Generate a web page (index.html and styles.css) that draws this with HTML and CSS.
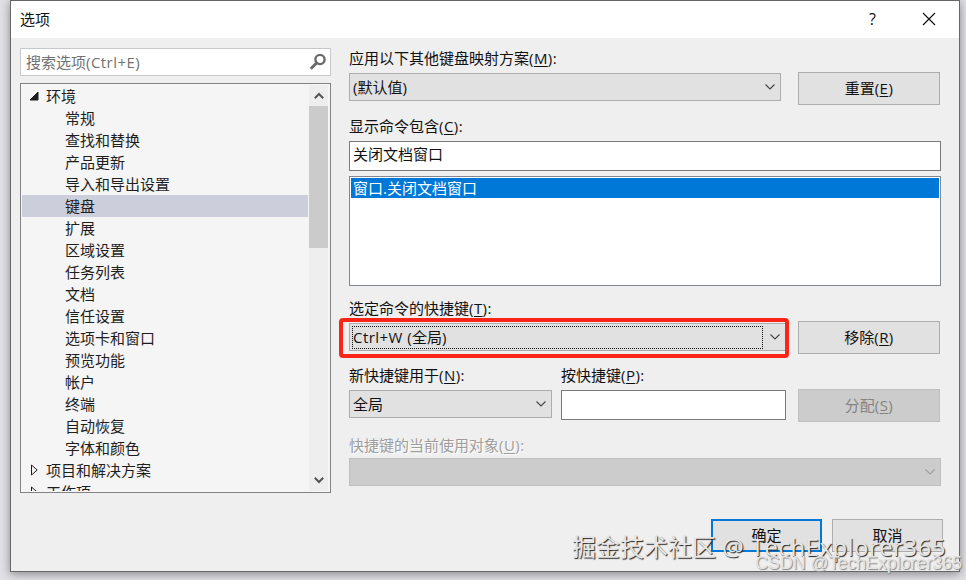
FILE: index.html
```
<!DOCTYPE html>
<html lang="zh-CN">
<head>
	<meta charset="UTF-8">
	<title>选项</title>
	<link rel="stylesheet" href="styles.css">
</head>
<body>

<div class="dialog">
	<div class="titlebar">
		<span class="title">选项</span>
		<span class="help">?</span>
		<svg class="close" width="14" height="14" viewBox="0 0 14 14"><path d="M1 1L13 13M13 1L1 13"/></svg>
	</div>

	<div class="content">
		<div class="side">
			<div class="search">
				<span>搜索选项<span class="en">(Ctrl+E)</span></span>
				<svg width="18" height="18" viewBox="0 0 18 18"><circle cx="11" cy="6.5" r="4.6"/><path d="M7.8 9.8L1.8 15.8"/></svg>
			</div>
			<div class="tree">
				<ul class="list">
					<li class="root"><svg width="10" height="10" viewBox="0 0 10 10"><path class="full" d="M9 1V9H1Z"/></svg>环境</li>
					<li>常规</li>
					<li>查找和替换</li>
					<li>产品更新</li>
					<li>导入和导出设置</li>
					<li class="on">键盘</li>
					<li>扩展</li>
					<li>区域设置</li>
					<li>任务列表</li>
					<li>文档</li>
					<li>信任设置</li>
					<li>选项卡和窗口</li>
					<li>预览功能</li>
					<li>帐户</li>
					<li>终端</li>
					<li>自动恢复</li>
					<li>字体和颜色</li>
					<li class="root"><svg width="10" height="12" viewBox="0 0 10 12"><path d="M2.5 1V11L8.2 6Z"/></svg>项目和解决方案</li>
					<li class="root"><svg width="10" height="12" viewBox="0 0 10 12"><path d="M2.5 1V11L8.2 6Z"/></svg>工作项</li>
				</ul>
				<div class="scroll">
					<svg width="10" height="8" viewBox="0 0 10 8"><path d="M.8 6.2L5 2L9.2 6.2"/></svg>
					<div class="thumb"></div>
					<svg width="10" height="8" viewBox="0 0 10 8"><path d="M.8 1.8L5 6L9.2 1.8"/></svg>
				</div>
			</div>
		</div>

		<div class="main">
			<div class="row">
				<div class="field wide">
					<label>应用以下其他键盘映射方案<span class="en">(<u>M</u>):</span></label>
					<div class="select"><span>(默认值)</span><svg class="arrow" width="12" height="8" viewBox="0 0 12 8"><path d="M1.5 1.5L6 6L10.5 1.5"/></svg></div>
				</div>
				<div class="btn">重置<span class="en">(<u>E</u>)</span></div>
			</div>

			<div class="field show">
				<label>显示命令包含<span class="en">(<u>C</u>):</span></label>
				<div class="input">关闭文档窗口</div>
				<div class="box"><div class="item">窗口.关闭文档窗口</div></div>
			</div>

			<div class="row keys">
				<div class="field wide">
					<label>选定命令的快捷键<span class="en">(<u>T</u>):</span></label>
					<div class="select focus"><span class="value"><span class="en">Ctrl+W (</span>全局)</span><svg class="arrow" width="12" height="8" viewBox="0 0 12 8"><path d="M1.5 1.5L6 6L10.5 1.5"/></svg><div class="mark"></div></div>
				</div>
				<div class="btn remove">移除<span class="en">(<u>R</u>)</span></div>
			</div>

			<div class="row new">
				<div class="field scope">
					<label>新快捷键用于<span class="en">(<u>N</u>):</span></label>
					<div class="select"><span>全局</span><svg class="arrow" width="12" height="8" viewBox="0 0 12 8"><path d="M1.5 1.5L6 6L10.5 1.5"/></svg></div>
				</div>
				<div class="field press">
					<label>按快捷键<span class="en">(<u>P</u>):</span></label>
					<div class="input"></div>
				</div>
				<div class="btn off">分配<span class="en">(<u>S</u>)</span></div>
			</div>

			<div class="field used">
				<label>快捷键的当前使用对象<span class="en">(<u>U</u>):</span></label>
				<div class="select off"><svg class="arrow" width="12" height="8" viewBox="0 0 12 8"><path d="M1.5 1.5L6 6L10.5 1.5"/></svg></div>
			</div>

			<div class="footer">
				<div class="btn ok">确定</div>
				<div class="btn">取消</div>
			</div>
		</div>
	</div>
</div>

<div class="water juejin">掘金技术社区 <span class="en">@ TechExplorer365</span></div>
<div class="water csdn">CSDN @TechExplorer365</div>

</body>
</html>
```
FILE: styles.css
```
*{
	box-sizing: border-box;
}
body{
	margin: 0;
	height: 580px;
	padding: 0 6px 8px 10px;
	overflow: hidden;
	position: relative;
	background: #e1e1e5;
	font: 15px/22px "Open Sans", "Noto Sans CJK SC", sans-serif;
	color: #111;
}
u{
	text-decoration: underline;
	text-decoration-thickness: 1px;
	text-underline-offset: 2px;
}
svg{
	fill: none;
	flex: none;
}
.en{
	letter-spacing: 0.45px;
}
.dialog{
	width: 950px;
	height: 572px;
	border: 1px solid #67676a;
	background: #efefef;
	box-shadow: 0 2px 9px rgba(0,0,0,0.4);
}

/* 标题栏 */
.titlebar{
	height: 37px;
	padding: 0 23px 2px 9px;
	display: flex;
	align-items: center;
	background: #fff;
}
.title{
	flex: 1;
}
.help{
	margin-right: 46px;
	font-size: 16px;
}
.close{
	stroke: #111;
	stroke-width: 1.2;
}

.content{
	display: flex;
	padding: 10px 0 0 9px;
}

/* 左侧 */
.side{
	width: 311px;
	margin-right: 18px;
}
.search{
	height: 28px;
	border: 1px solid #c8c8cc;
	background: #fff;
	display: flex;
	align-items: center;
	justify-content: space-between;
	padding: 0 3px 0 5px;
	color: #717171;
}
.search svg{
	stroke: #6a6a6a;
	stroke-width: 2.4;
}
.search svg path{
	stroke-width: 3;
}
.tree{
	height: 410px;
	margin-top: 7px;
	border: 1px solid #828287;
	background: #f5f5f5;
	display: flex;
	overflow: hidden;
	padding: 1px 2px 1px 1px;
}
.list{
	flex: 1;
	height: 406px;
	margin: 0;
	padding: 0;
	list-style: none;
	overflow: hidden;
	color: #1e1e1e;
}
.list li{
	height: 22px;
	padding-left: 43px;
	white-space: nowrap;
}
.list .root{
	display: flex;
	align-items: center;
	padding-left: 7px;
}
.root svg{
	margin-right: 7px;
	stroke: #1e1e1e;
}
.root .full{
	fill: #1e1e1e;
}
.list .on{
	background: #cccedb;
}
.scroll{
	width: 19px;
	margin-left: 1px;
	background: #eee;
	display: flex;
	flex-direction: column;
	align-items: center;
	padding: 7px 0;
}
.scroll svg{
	stroke: #555;
	stroke-width: 2;
}
.thumb{
	width: 19px;
	height: 142px;
	margin: 6px 0 auto;
	background: #cbcbcb;
}

/* 右侧 */
.main{
	width: 594px;
}
.row{
	display: flex;
	align-items: flex-start;
}
label{
	display: block;
	height: 22px;
	line-height: 20px;
	margin-bottom: 3px;
	white-space: nowrap;
}
.wide{
	width: 432px;
	margin-right: 17px;
}
.select{
	height: 28px;
	border: 1px solid #adadad;
	background: #e1e1e1;
	display: flex;
	align-items: center;
	justify-content: space-between;
	padding: 0 4px 0 3px;
}
.arrow{
	stroke: #444;
	stroke-width: 1.1;
	margin-left: auto;
}
.input{
	height: 30px;
	border: 1px solid #7a7a7a;
	background: #fff;
	padding: 1px 3px;
}
.btn{
	width: 142px;
	height: 33px;
	margin-top: 24px;
	border: 1px solid #adadad;
	background: #e1e1e1;
	line-height: 31px;
	text-align: center;
}
.show{
	width: 592px;
	margin-top: 11px;
}
.box{
	height: 110px;
	margin-top: 5px;
	border: 1px solid #828790;
	background: #fff;
	padding: 1px;
}
.item{
	height: 20px;
	line-height: 20px;
	padding-left: 2px;
	background: #0078d7;
	color: #fff;
}
.keys{
	margin-top: 12px;
}
.focus{
	width: 437px;
	position: relative;
}
.value{
	width: 411px;
	height: 23px;
	line-height: 20px;
	margin-left: -1px;
	border: 1px dotted #111;
}
/* 红色标注框 */
.mark{
	position: absolute;
	left: -11px;
	top: -6px;
	width: 450px;
	height: 40px;
	border: 4px solid #fb2517;
	border-radius: 4px;
}
.remove{
	margin-top: 23px;
}
.new{
	margin-top: 11px;
}
.scope{
	width: 203px;
	margin-right: 9px;
}
.press{
	width: 225px;
	margin-right: 12px;
}
.off{
	background: #ccc;
	border-color: #bfbfbf;
	color: #838383;
}
.off .arrow{
	stroke: #a0a0a0;
}
.used{
	width: 592px;
	margin-top: 13px;
}
.used label{
	margin-bottom: 1px;
	color: #9d9d9d;
	text-shadow: 1px 1px #fff;
}
.footer{
	display: flex;
	justify-content: flex-end;
	gap: 10px;
	margin-top: 33px;
}
.footer .btn{
	width: 111px;
	margin: 0;
}
.footer .ok{
	border: 2px solid #0078d7;
	line-height: 29px;
}

/* 水印 */
.water{
	position: absolute;
	white-space: nowrap;
}
.juejin{
	left: 572px;
	top: 531px;
	font-size: 24px;
	line-height: 32px;
	color: #e6e6e6;
	text-shadow: 1px 1px 1px #222;
}
.csdn{
	right: 4px;
	top: 552px;
	font: 17.8px/22px "Liberation Sans", sans-serif;
	color: #e4e4e4;
	text-shadow: 1px 1px 1px #888;
}
```
